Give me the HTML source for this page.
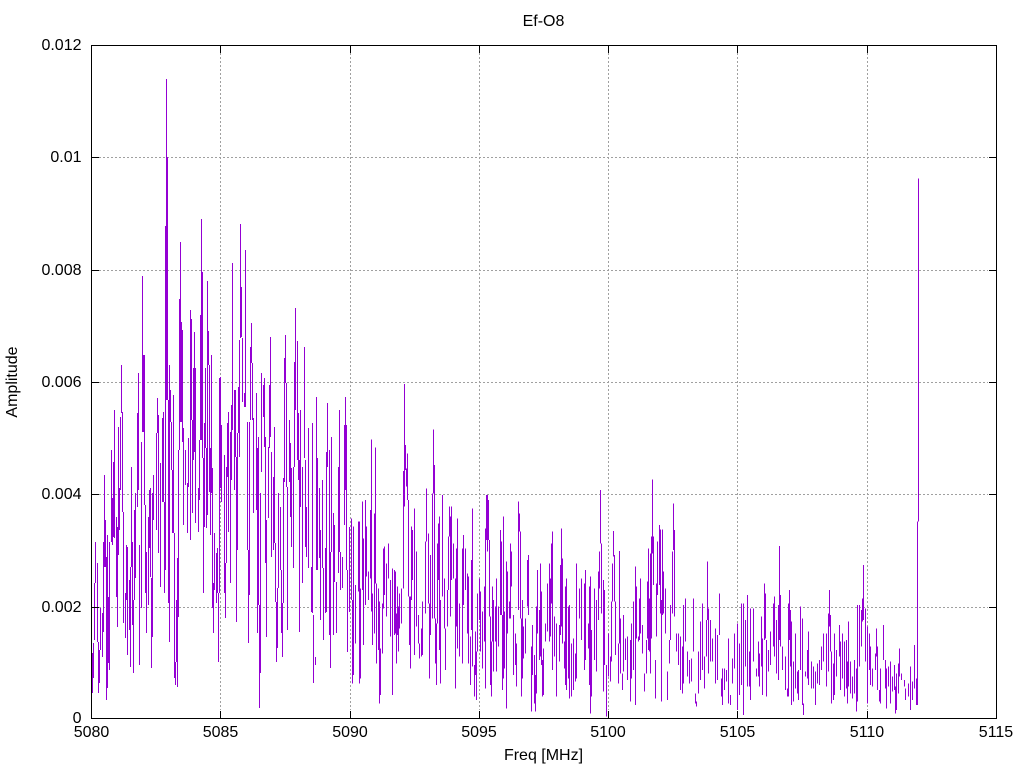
<!DOCTYPE html>
<html><head><meta charset="utf-8"><title>Ef-O8</title>
<style>
html,body{margin:0;padding:0;background:#fff;width:1024px;height:768px;overflow:hidden}
svg{display:block}
text{font-family:"Liberation Sans",sans-serif;font-size:16px;fill:#000}
.d{fill:none;stroke:#9400d3}
</style></head><body>
<svg width="1024" height="768" viewBox="0 0 1024 768">
<g fill="none" stroke="#a0a0a0" stroke-width="1" stroke-dasharray="2 2" shape-rendering="crispEdges">
<path d="M99 157.5H988M99 270.5H988M99 382.5H988M99 494.5H988M99 607.5H988"/>
<path d="M220.5 53V710M350.5 53V710M479.5 53V710M608.5 53V710M737.5 53V710M867.5 53V710"/>
</g>
<g transform="translate(.5,0)" class="d" stroke-width="1" shape-rendering="crispEdges"><path class="d" d="M92 653V693M93 643V678M94 583V640M95 542V583M97 563V642M98 642V693M99 650V683M100 608V650M102 613V657M103 542V632M104 475V567M105 520V567M106 557V700M107 535V688M108 597V663M109 542V670M111 450V542M112 498V545M113 462V537M114 410V538M116 517V597M117 527V627M118 427V555M119 488V530M120 417V490M121 365V413M122 412V512M123 512V623M125 593V638M126 545V600M127 547V655M129 580V630M130 567V667M131 467V567M132 542V625M133 600V673M134 510V600M135 493V578M137 413V507M138 373V490M139 545V665M141 442V608M142 276V432M143 355V432M144 355V505M145 505V593M146 552V633M148 517V605M149 490V548M150 488V577M151 578V668M152 493V637M153 475V520M156 433V530M157 398V433M158 415V553M160 463V587M162 418V502M163 412V502M164 502V593M165 226V570M166 79V400M167 157V400M168 400V603M169 365V642M170 390V422M171 422V470M172 470V533M173 395V533M174 533V678M175 662V685M176 600V662M177 558V687M178 450V617M179 299V450M180 242V422M181 322V422M182 330V442M183 428V525M185 450V485M187 483V533M188 438V487M190 310V540M191 319V420M192 420V513M193 368V460M194 332V452M195 368V523M198 488V532M199 440V500M200 315V440M201 219V440M202 272V458M203 458V593M204 423V527M205 368V448M206 448V528M207 281V515M208 331V365M209 365V492M210 448V535M211 355V493M212 468V608M213 583V633M214 533V590M216 553V603M217 548V593M218 593V662M219 378V593M220 377V488M221 425V502M224 455V593M225 563V618M226 467V563M227 423V477M228 412V532M230 432V583M231 405V480M232 263V430M234 390V490M235 390V457M236 457V622M237 433V550M238 387V433M239 340V457M240 224V338M241 287V337M242 338V402M244 393V407M245 250V407M247 422V550M248 550V643M249 422V595M250 347V420M251 323V363M252 363V420M253 418V513M256 393V510M257 448V633M258 437V605M259 605V708M260 493V673M261 373V472M263 385V417M264 378V447M265 437V563M266 520V637M268 447V518M269 385V448M270 337V437M271 452V557M273 477V550M274 427V543M275 543V602M276 602V662M277 588V648M278 493V588M280 507V570M281 570V633M282 603V657M283 478V603M284 358V482M285 335V383M286 383V487M287 487V630M289 420V482M290 443V517M291 468V547M293 467V568M294 362V467M295 308V410M297 341V460M298 413V480M299 460V632M300 410V507M302 467V583M304 347V458M305 460V547M306 507V557M308 428V568M311 567V612M312 423V613M313 615V683M315 657V665M316 397V570M317 458V570M319 488V558M320 530V620M322 480V568M323 568V640M325 548V613M326 452V612M327 403V467M329 450V635M330 552V668M331 437V552M333 513V635M334 525V582M336 582V633M338 467V573M339 410V552M340 552V590M342 557V588M344 425V525M345 397V490M346 425V570M347 570V652M349 527V612"/></g>
<g transform="translate(350.17,370) scale(.33333)" class="d" stroke-width="3" shape-rendering="crispEdges"><path class="d" d="M4 445V690M7 690V940M10 470V915M16 645V820M25 455V665M28 455V940M31 655V925M37 395V660M40 505V825M46 390V705M49 470V620M55 605V690M61 420V625M64 208V725M67 670V825M73 430V790M76 232V640M79 640V880M85 655V840M88 695V1000M91 835V975M97 700V850M100 535V715M103 530V675M109 580V740M115 520V625M121 630V800M127 595V975M133 600V795M136 605V790M139 730V880M142 650V795M145 710V845M148 670V775M154 655V760M160 303V655M163 42V410M166 225V300M169 295V350M172 250V390M175 390V680M178 680V825M181 680V895M184 470V690M187 480V630M193 415V855M199 545V770M205 735V820M208 820V865M214 775V860M217 695V855M226 515V730M229 355V515M235 490V700M238 700V925M241 555V795M247 370V745M250 178V370M253 285V745M256 745V880M259 760V945M262 520V760M265 460V630M268 440V840M271 690V940M277 375V680M283 625V775M286 775V900M292 660V770M295 500V660M298 410V500M301 440V740M304 410V630M310 520V625M316 625V955M319 535V770M322 445V835M328 700V860M337 535V880M340 495V705M346 535V660M352 610V790M355 620V880M361 800V945M364 570V780M367 415V890M373 885V980M376 785V915M379 845V990M382 670V845M388 625V750M391 665V845M397 725V895M403 650V815M406 475V955M409 375V510M412 375V545M415 390V510M418 510V740M421 740V945M424 815V980M427 650V815M430 690V905M436 710V815M439 625V905M445 710V830M451 480V735M454 515V735M457 735V960M460 440V925M463 725V895M469 575V1015M472 605V790M478 695V745M481 520V745M484 545V650M490 735V915M496 790V885M499 820V950M505 395V720M508 430V485M511 485V745M514 745V980M517 690V925M520 770V865M526 745V850M532 570V710M535 555V735M544 830V1025M547 765V915M553 855V1000M556 915V1025M559 710V970M562 600V790M568 720V870M571 580V860M574 665V885M577 870V980M580 835V975M586 760V815M592 640V785M598 580V815M601 625V800M604 520V700M607 485V900M613 740V860M619 760V980M628 765V875M631 585V795M634 475V770M637 565V820M643 815V895M646 650V945M649 625V960M655 710V925M658 705V985M664 820V980M670 805V960M676 850V935M679 580V925M688 655V745M694 625V810M703 640V900M706 600V870M715 760V835M718 650V945M721 620V1030M724 780V980M733 655V870M739 690V905M745 605V750M748 545V655M751 360V520M754 520V730M760 630V965M763 660V885M769 885V1040M775 790V920"/></g>
<g transform="translate(610.17,470) scale(.33333)" class="d" stroke-width="3" shape-rendering="crispEdges"><path class="d" d="M1 560V635M4 395V575M7 280V395M10 183V260M13 255V395M16 395V555M25 520V640M28 243V520M31 445V610M37 610V660M40 435V605M46 505V570M52 500V630M61 510V695M64 460V625M70 395V600M76 290V705M79 350V505M85 500V515M88 385V510M91 325V490M97 465V550M103 610V665M109 510V610M112 335V505M115 235V540M118 385V545M121 250V610M124 200V505M127 28V250M130 200V345M136 570V685M139 340V500M142 215V375M148 165V345M151 178V430M154 390V695M157 178V435M160 305V430M166 355V490M172 605V690M178 510V580M181 405V510M187 245V430M190 100V240M193 180V440M199 490V545M205 490V585M211 500V660M217 530V670M220 405V640M226 385V515M232 545V620M238 570V640M244 565V635M250 385V545M256 670V700M259 695V710M265 545V670M271 455V630M277 400V600M283 560V655M289 450V560M292 275V450M295 415V610M301 450V575M307 505V575M316 475V640M322 495V630M328 370V495M334 625V680M337 595V705M343 595V660M349 600V635M355 505V700M361 675V705M367 565V640M373 490V595M382 460V720M388 520V675M394 400V645M400 400V735M406 450V590M412 375V650M418 545V650M421 415V690M430 415V575M439 595V620M445 515V620M448 550V650M454 440V590M457 505V675M463 340V510M466 370V505M469 510V680M475 540V605M481 485V585M490 400V530M493 380V560M499 450V610M505 405V630M508 228V510M511 375V530M517 530V600M526 560V660M532 655V680M535 400V680M538 360V510M541 420V590M544 455V705M550 575V695M556 490V655M562 605V670M565 600V690M571 410V600M577 445V705M580 700V735M586 605V620M592 540V625M595 485V645M604 575V655M610 590V655M616 605V705M622 580V640M628 570V645M634 530V600M640 490V575M649 490V650M655 430V605M658 360V470M661 435V545M664 545V700M670 580V690M673 490V675M679 540V620M688 465V560M691 515V660M697 490V625M703 515V680M709 510V655M712 575V700M715 455V650M721 575V670M727 620V685M733 570V670M739 595V725M742 405V695M748 405V590M754 420V530M757 385V455M760 285V450M766 415V575M772 470V700M778 490V600M781 530V645M787 595V650M796 550V600M799 475V560M802 530V660M808 660V695M811 595V700M820 465V570M826 570V655M829 595V715M835 590V650M841 575V700M847 620V665M853 585V660M856 650V730M859 610V720M865 580V670M868 535V620M874 610V630M883 630V650M886 655V690M895 640V680M901 590V720M907 635V690M913 525V655M919 625V705M922 155V705M925 -875V155"/></g>
<g fill="none" stroke="#000" stroke-width="1" shape-rendering="crispEdges">
<path d="M91.5 45.5H996.5V718.5H91.5Z"/>
<path d="M91.5 157.5H99M91.5 270.5H99M91.5 382.5H99M91.5 494.5H99M91.5 607.5H99M996.5 157.5H989M996.5 270.5H989M996.5 382.5H989M996.5 494.5H989M996.5 607.5H989"/>
<path d="M220.5 45V53M350.5 45V53M479.5 45V53M608.5 45V53M737.5 45V53M867.5 45V53M220.5 719V711M350.5 719V711M479.5 719V711M608.5 719V711M737.5 719V711M867.5 719V711"/>
</g>
<g text-anchor="end">
<text x="81.5" y="50">0.012</text><text x="81.5" y="162">0.01</text><text x="81.5" y="275">0.008</text><text x="81.5" y="387">0.006</text><text x="81.5" y="499">0.004</text><text x="81.5" y="612">0.002</text><text x="81.5" y="723">0</text>
</g>
<g text-anchor="middle">
<text x="91.5" y="737">5080</text><text x="220.5" y="737">5085</text><text x="350" y="737">5090</text><text x="479" y="737">5095</text><text x="608" y="737">5100</text><text x="737.5" y="737">5105</text><text x="867" y="737">5110</text><text x="996" y="737">5115</text>
<text x="543.5" y="760">Freq [MHz]</text>
<text x="543.5" y="26">Ef-O8</text>
<text transform="translate(17,382) rotate(-90)">Amplitude</text>
</g>
</svg>
</body></html>
